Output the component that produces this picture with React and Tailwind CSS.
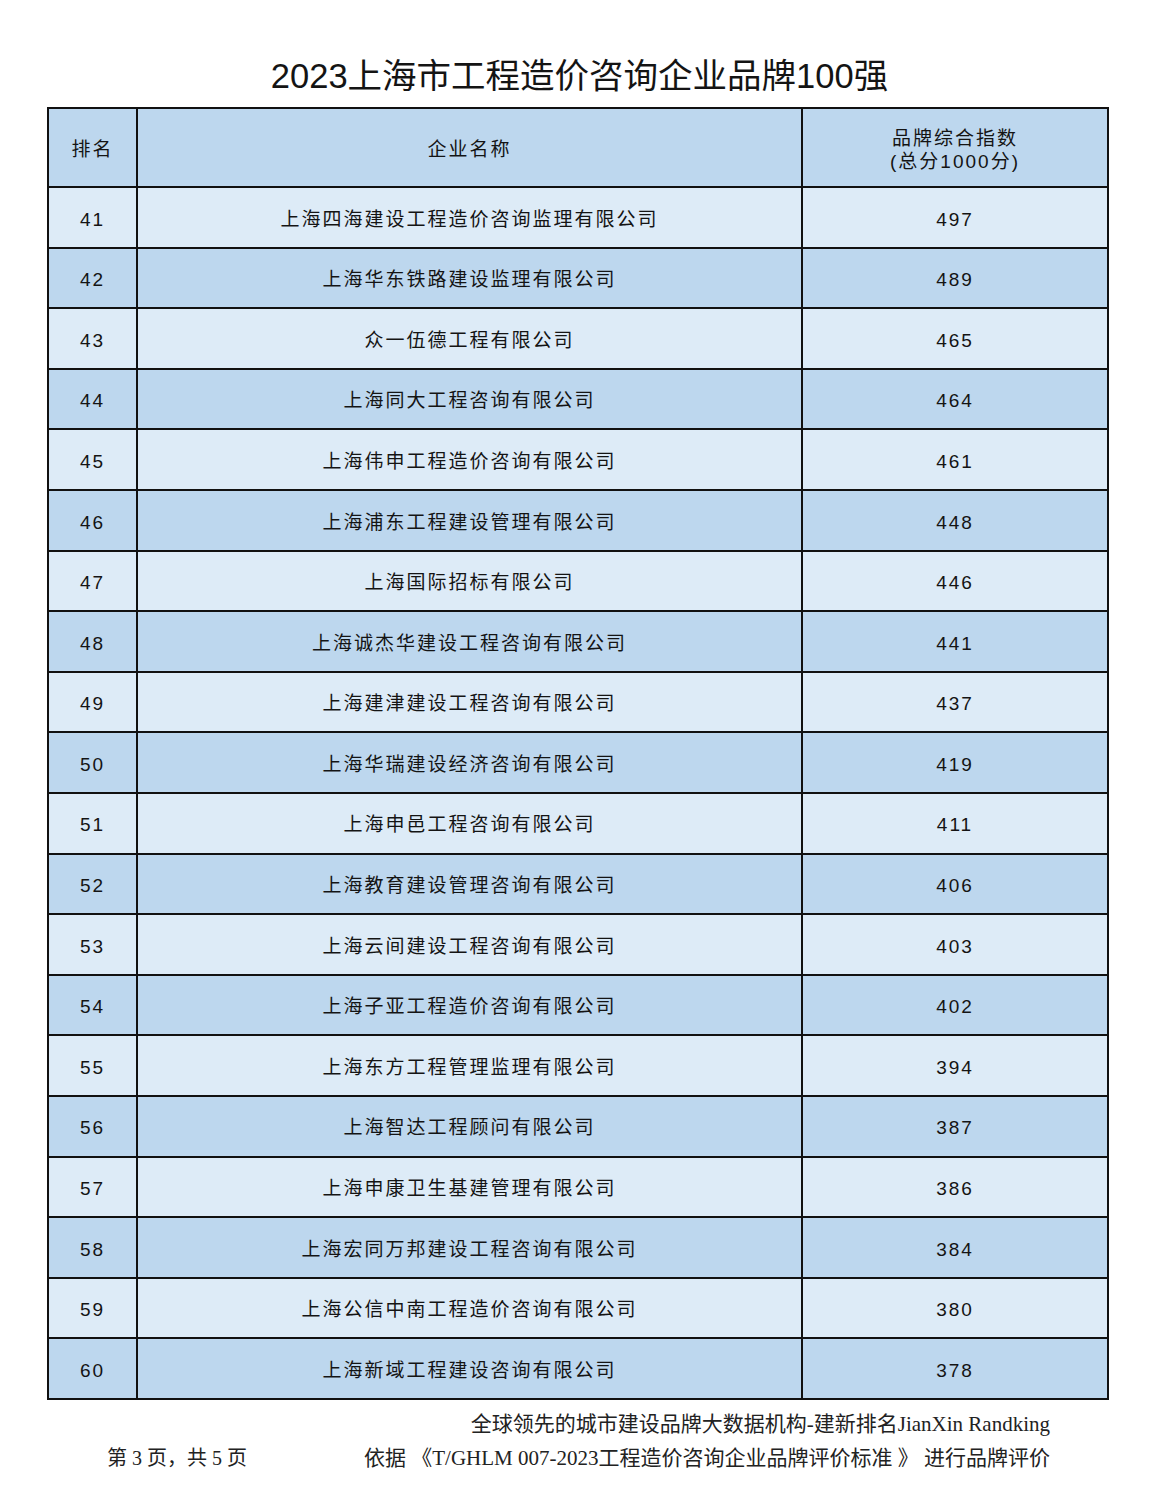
import React from "react";

const rows = [
  [41, "上海四海建设工程造价咨询监理有限公司", 497],
  [42, "上海华东铁路建设监理有限公司", 489],
  [43, "众一伍德工程有限公司", 465],
  [44, "上海同大工程咨询有限公司", 464],
  [45, "上海伟申工程造价咨询有限公司", 461],
  [46, "上海浦东工程建设管理有限公司", 448],
  [47, "上海国际招标有限公司", 446],
  [48, "上海诚杰华建设工程咨询有限公司", 441],
  [49, "上海建津建设工程咨询有限公司", 437],
  [50, "上海华瑞建设经济咨询有限公司", 419],
  [51, "上海申邑工程咨询有限公司", 411],
  [52, "上海教育建设管理咨询有限公司", 406],
  [53, "上海云间建设工程咨询有限公司", 403],
  [54, "上海子亚工程造价咨询有限公司", 402],
  [55, "上海东方工程管理监理有限公司", 394],
  [56, "上海智达工程顾问有限公司", 387],
  [57, "上海申康卫生基建管理有限公司", 386],
  [58, "上海宏同万邦建设工程咨询有限公司", 384],
  [59, "上海公信中南工程造价咨询有限公司", 380],
  [60, "上海新域工程建设咨询有限公司", 378],
];

export default function App() {
  return (
    <div
      className="w-[1159px] h-[1500px] bg-white text-[#141414]"
      style={{ fontFamily: '"Liberation Sans", "Noto Sans CJK SC", sans-serif' }}
    >
      <div className="h-[107px] pt-[53px] text-center text-[34.5px] leading-[46px]">
        2023上海市工程造价咨询企业品牌100强
      </div>
      <div className="ml-[47px] w-[1062px] border-x-2 border-t-2 border-[#111] text-[19px] tracking-[2px]">
        <div className="flex h-[79px] pt-[5px] border-b-2 border-[#111] bg-[#bdd7ee]">
          <div className="w-[89px] border-r-2 border-[#111] -mt-[5px] pt-[5px] flex items-center justify-center">排名</div>
          <div className="w-[665px] border-r-2 border-[#111] -mt-[5px] pt-[5px] flex items-center justify-center">企业名称</div>
          <div className="flex-1 flex flex-col items-center justify-center leading-[23px]">
            <div>品牌综合指数</div>
            <div>(总分1000分)</div>
          </div>
        </div>
        {rows.map(([rank, name, score], i) => (
          <div
            key={rank}
            className={`flex h-[60.6px] border-b-2 border-[#111] ${i % 2 === 0 ? "bg-[#ddebf7]" : "bg-[#bdd7ee]"}`}
          >
            <div className="w-[89px] border-r-2 border-[#111] pt-[5px] flex items-center justify-center">{rank}</div>
            <div className="w-[665px] border-r-2 border-[#111] pt-[5px] flex items-center justify-center">{name}</div>
            <div className="flex-1 pt-[5px] flex items-center justify-center">{score}</div>
          </div>
        ))}
      </div>
      <div
        className="text-[21px] leading-[34px] text-[#222] pt-[7px]"
        style={{ fontFamily: '"Liberation Serif", "Noto Sans CJK SC", serif' }}
      >
        <div className="text-right pr-[109px]">全球领先的城市建设品牌大数据机构-建新排名JianXin Randking</div>
        <div className="flex justify-between pl-[107px] pr-[109px]">
          <span className="text-[20px]">第 3 页，共 5 页</span>
          <span>依据 《T/GHLM 007-2023工程造价咨询企业品牌评价标准 》 进行品牌评价</span>
        </div>
      </div>
    </div>
  );
}
